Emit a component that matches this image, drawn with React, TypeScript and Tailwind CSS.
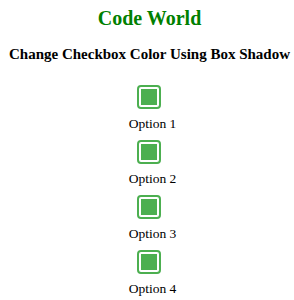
const options = ["Option 1", "Option 2", "Option 3", "Option 4"];

function GreenBox() {
  return (
    <div className="w-6 h-6 border-2 border-[#4caf50] rounded-[4px] p-[2px] bg-white">
      <div className="w-full h-full bg-[#4caf50]" />
    </div>
  );
}

export default function App() {
  return (
    <div className="min-h-screen bg-white text-black text-center pl-[5px] font-['Liberation_Serif',serif]">
      <h1 className="pt-[6px] text-[20px] leading-[24px] font-bold text-[#008000]">
        Code World
      </h1>

      <h2 className="mt-[15px] text-[15px] leading-[18px] font-bold">
        Change Checkbox Color Using Box Shadow
      </h2>

      <div className="mt-[22px] flex flex-col items-center gap-[9px]">
        {options.map((o) => (
          <div key={o} className="flex flex-col items-center">
            <GreenBox />
            <label className="mt-[7px] ml-[6px] text-[13.5px] leading-[15px]">{o}</label>
          </div>
        ))}
      </div>
    </div>
  );
}
